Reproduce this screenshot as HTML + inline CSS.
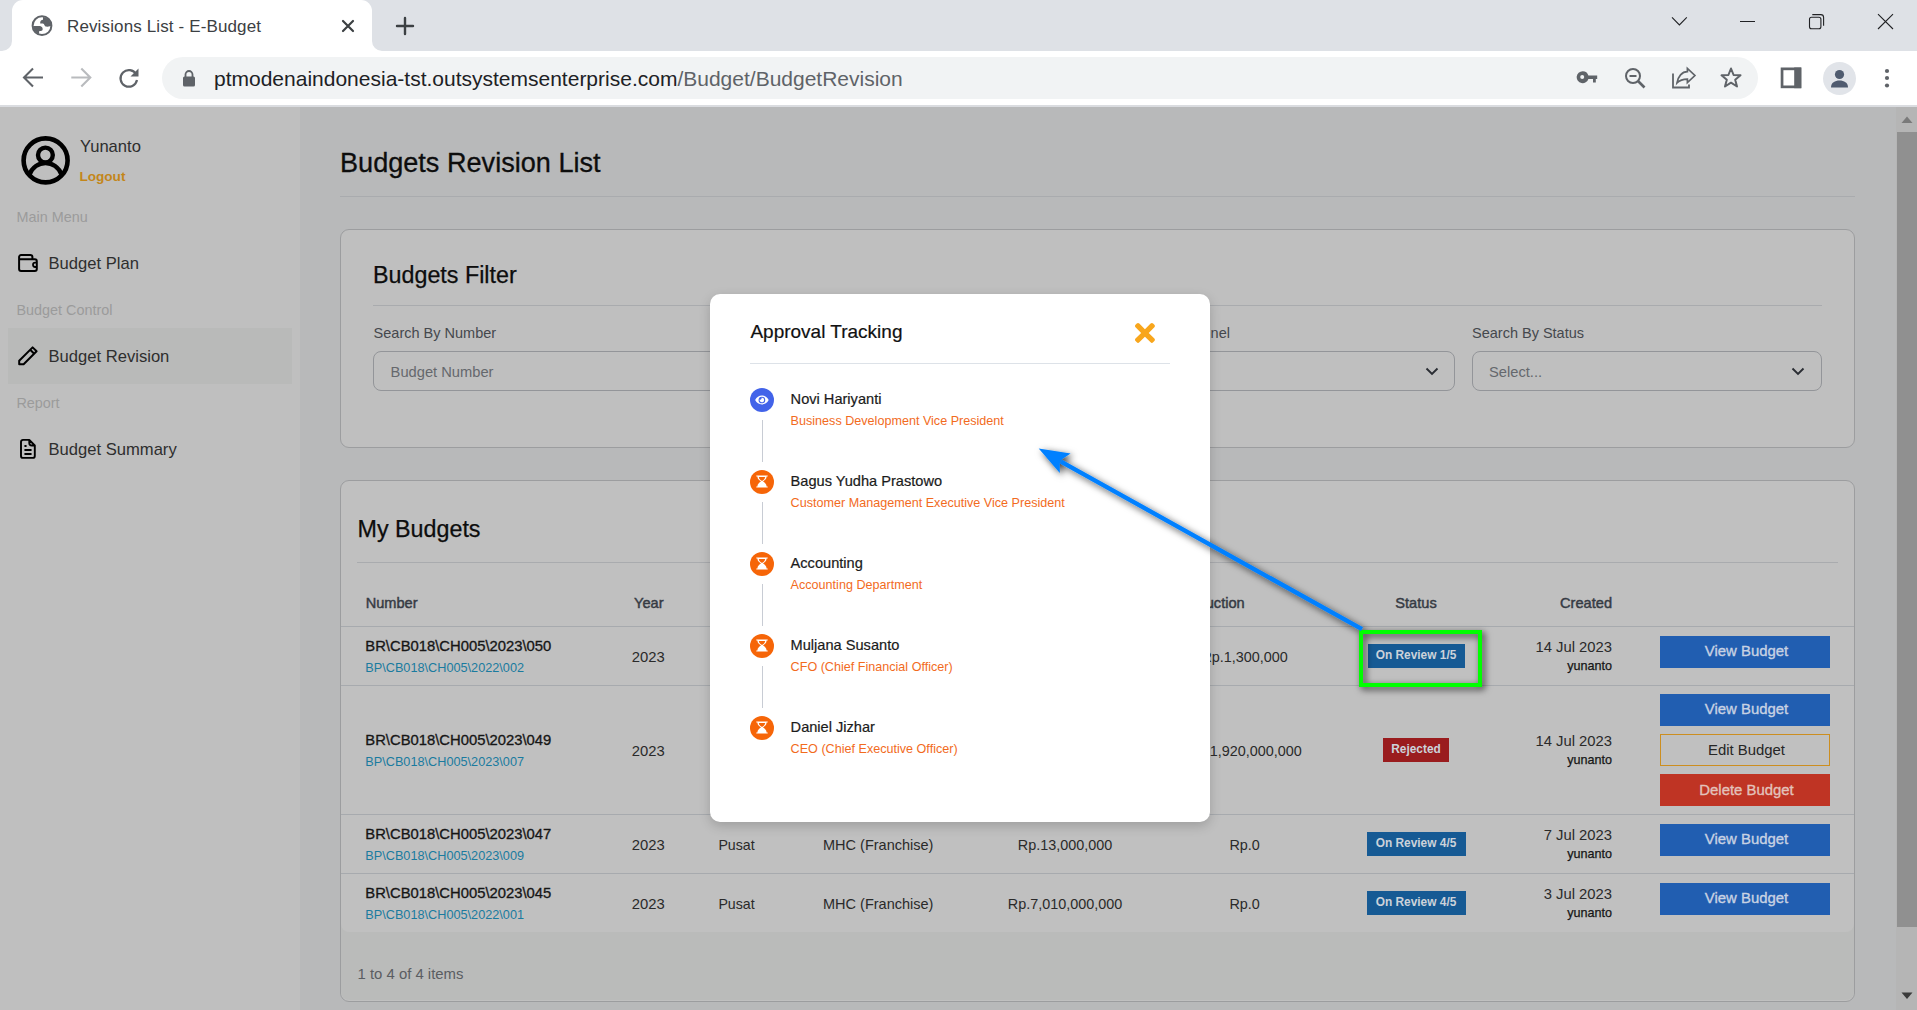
<!DOCTYPE html>
<html><head><meta charset="utf-8"><title>Revisions List - E-Budget</title>
<style>
html,body{margin:0;padding:0;width:1917px;height:1010px;overflow:hidden;background:#fff}
body{position:relative;font-family:"Liberation Sans",sans-serif}
.t{position:absolute;line-height:1;white-space:nowrap}
svg{display:block}
</style></head><body>
<div style="position:absolute;left:0px;top:0px;width:1917px;height:51px;background:#dee1e6"></div>
<div style="position:absolute;left:12px;top:0px;width:360px;height:51px;background:#fff;border-radius:11px 11px 0 0"></div>
<svg style="position:absolute;left:2px;top:41px;" width="10" height="10" viewBox="0 0 10 10"><path d="M10 0 V10 H0 A10 10 0 0 0 10 0 Z" fill="#fff"/></svg>
<svg style="position:absolute;left:372px;top:41px;" width="10" height="10" viewBox="0 0 10 10"><path d="M0 0 V10 H10 A10 10 0 0 1 0 0 Z" fill="#fff"/></svg>
<svg style="position:absolute;left:31px;top:15px;" width="22" height="22" viewBox="0 0 22 22"><defs><clipPath id="gc"><circle cx="11" cy="10.7" r="9"/></clipPath></defs><circle cx="11" cy="10.7" r="9.4" stroke="#5f6368" stroke-width="2" fill="#fff"/><g clip-path="url(#gc)" fill="#5f6368"><path d="M12 0 V4.8 C10.5 5 9.2 6 9.2 7.5 V8.6 H11.8 C12.6 8.6 13.2 9.5 13.6 10.6 C14.2 11.6 15.5 11.9 16.5 11.7 L22 10.5 L22 0 Z"/><path d="M0 10.9 H8.6 C10.3 11 11.7 12.2 11.7 14 C11.7 15.2 11 16 9.8 16 H8.6 C8.3 16 8.1 16.4 8.1 17 V22 H0 Z"/></g></svg>
<div class="t" style="top:18.21px;font-size:17px;color:#3c4043;letter-spacing:0.13px;left:67px;">Revisions List - E-Budget</div>
<svg style="position:absolute;left:341px;top:19px;" width="14" height="14" viewBox="0 0 14 14"><path d="M2 2 L12 12 M12 2 L2 12" stroke="#3c4043" stroke-width="2.2" stroke-linecap="round"/></svg>
<svg style="position:absolute;left:395px;top:16px;" width="20" height="20" viewBox="0 0 20 20"><path d="M10 2 V18 M2 10 H18" stroke="#3c4043" stroke-width="2.4" stroke-linecap="round"/></svg>
<svg style="position:absolute;left:1671px;top:15px;" width="18" height="12" viewBox="0 0 18 12"><path d="M1 2.3 L8.4 9.9 L15.8 2.3" stroke="#202124" stroke-width="1.1" fill="none"/></svg>
<div style="position:absolute;left:1740px;top:21px;width:15.2px;height:1.2px;background:#202124"></div>
<svg style="position:absolute;left:1807px;top:12px;" width="20" height="20" viewBox="0 0 20 20"><rect x="2.5" y="5.3" width="11.4" height="11.4" rx="2" stroke="#202124" stroke-width="1.1" fill="none"/><path d="M5.3 2.6 H13.8 Q16.6 2.6 16.6 5.4 V13.8" stroke="#202124" stroke-width="1.1" fill="none"/></svg>
<svg style="position:absolute;left:1876px;top:12px;" width="20" height="20" viewBox="0 0 20 20"><path d="M2 2.2 L17 17 M17 2.2 L2 17" stroke="#202124" stroke-width="1.1"/></svg>
<div style="position:absolute;left:0px;top:51px;width:1917px;height:54px;background:#fff"></div>
<div style="position:absolute;left:0px;top:105px;width:1917px;height:2px;background:#dadce0"></div>
<svg style="position:absolute;left:21px;top:66px;" width="24" height="24" viewBox="0 0 24 24"><path d="M22 11.5 H3.5 M12 2.5 L3 11.5 L12 20.5" stroke="#5f6368" stroke-width="2.1" fill="none"/></svg>
<svg style="position:absolute;left:69px;top:66px;" width="24" height="24" viewBox="0 0 24 24"><path d="M2.3 11.5 H20.8 M12.3 2.5 L21.3 11.5 L12.3 20.5" stroke="#b9bbbe" stroke-width="2.1" fill="none"/></svg>
<svg style="position:absolute;left:117px;top:66px;" width="24" height="24" viewBox="0 0 24 24"><path d="M19.2 8.5 A8.3 8.3 0 1 0 20 14" stroke="#5f6368" stroke-width="2.2" fill="none"/><path d="M21.5 2.5 V10.5 H13.5 Z" fill="#5f6368"/></svg>
<div style="position:absolute;left:162px;top:57px;width:1596px;height:42px;background:#f1f3f4;border-radius:21px"></div>
<svg style="position:absolute;left:181px;top:69px;" width="16" height="18" viewBox="0 0 16 18"><path d="M4.5 8 V5.5 A3.5 3.5 0 0 1 11.5 5.5 V8" stroke="#5f6368" stroke-width="1.8" fill="none"/><rect x="2" y="7.5" width="12" height="10" rx="1.5" fill="#5f6368"/></svg>
<div class="t" style="top:68.22px;font-size:21px;color:#000;left:214px;"><span style="color:#202124">ptmodenaindonesia-tst.outsystemsenterprise.com</span><span style="color:#5f6368">/Budget/BudgetRevision</span></div>
<svg style="position:absolute;left:1575px;top:70px;" width="24" height="14" viewBox="0 0 24 14"><path fill-rule="evenodd" d="M7.7 1.2 A6 6 0 1 0 13.4 9 H18 V12.5 H20.8 V9 H22.2 V5.5 H13.4 A6 6 0 0 0 7.7 1.2 Z M7.2 4.9 A2 2 0 1 1 7.2 8.9 A2 2 0 1 1 7.2 4.9 Z" fill="#5f6368"/></svg>
<svg style="position:absolute;left:1623px;top:66px;" width="24" height="24" viewBox="0 0 24 24"><circle cx="10" cy="10" r="7" stroke="#5f6368" stroke-width="2" fill="none"/><path d="M6.5 10 H13.5" stroke="#5f6368" stroke-width="2"/><path d="M15 15 L21.5 21.5" stroke="#5f6368" stroke-width="2.6"/></svg>
<svg style="position:absolute;left:1671px;top:66px;" width="26" height="24" viewBox="0 0 26 24"><path d="M2 7.6 V21.5 H18 V18.4" stroke="#5f6368" stroke-width="1.8" fill="none"/><path d="M6 17 C7 10.5 11 5.7 16.4 5.7 V2.5 L23.9 9.5 L16.4 16.5 V13.2 C11.5 13.2 8.5 14.5 6 17 Z" stroke="#5f6368" stroke-width="1.7" fill="none" stroke-linejoin="miter"/></svg>
<svg style="position:absolute;left:1719px;top:66px;" width="24" height="24" viewBox="0 0 24 24"><path d="M12 2.5 L14.6 9 L21.5 9.3 L16.2 13.7 L18 20.5 L12 16.7 L6 20.5 L7.8 13.7 L2.5 9.3 L9.4 9 Z" stroke="#5f6368" stroke-width="2" fill="none" stroke-linejoin="round"/></svg>
<svg style="position:absolute;left:1779px;top:66px;" width="24" height="24" viewBox="0 0 24 24"><rect x="3.05" y="2.85" width="17.9" height="18" stroke="#5f6368" stroke-width="2.7" fill="none"/><rect x="15.2" y="1.5" width="7.1" height="20.7" fill="#5f6368"/></svg>
<svg style="position:absolute;left:1823px;top:62px;" width="33" height="33" viewBox="0 0 33 33"><circle cx="16.5" cy="16.5" r="16.5" fill="#e1e4e9"/><circle cx="16.5" cy="12.5" r="4.6" fill="#4f5b6f"/><path d="M8 25.5 C8 20.5 12 18.5 16.5 18.5 C21 18.5 25 20.5 25 25.5 Z" fill="#4f5b6f"/></svg>
<svg style="position:absolute;left:1883px;top:68px;" width="8" height="20" viewBox="0 0 8 20"><circle cx="4" cy="3" r="2.1" fill="#5f6368"/><circle cx="4" cy="10" r="2.1" fill="#5f6368"/><circle cx="4" cy="17.5" r="2.1" fill="#5f6368"/></svg>
<div style="position:absolute;left:0px;top:107px;width:300px;height:903px;background:#bfbfbf"></div>
<div style="position:absolute;left:300px;top:107px;width:1597px;height:903px;background:#b8b9ba"></div>
<div style="position:absolute;left:1896px;top:107px;width:21px;height:903px;background:#b5b5b5"></div>
<div style="position:absolute;left:1897px;top:132px;width:20px;height:795px;background:#909090"></div>
<svg style="position:absolute;left:1901px;top:116px;" width="12" height="8" viewBox="0 0 12 8"><path d="M6 0.5 L11.5 7 H0.5 Z" fill="#7a7a7a"/></svg>
<svg style="position:absolute;left:1901px;top:992px;" width="12" height="8" viewBox="0 0 12 8"><path d="M0.5 0.5 H11.5 L6 7 Z" fill="#3b3b3b"/></svg>
<svg style="position:absolute;left:20px;top:135px;" width="52" height="52" viewBox="0 0 52 52"><circle cx="25.6" cy="25.4" r="22" stroke="#000" stroke-width="4.6" fill="none"/><circle cx="25.4" cy="20" r="7.4" stroke="#000" stroke-width="4.4" fill="none"/><path d="M9 40.5 C12 32 19 28 25.5 28 C32 28 39 32 42 40.5" stroke="#000" stroke-width="4.4" fill="none"/></svg>
<div class="t" style="top:139.24px;font-size:16.6px;color:#2e2e2e;left:80px;">Yunanto</div>
<div class="t" style="top:169.68px;font-size:13.6px;color:#c3861a;font-weight:700;left:79.4px;">Logout</div>
<div class="t" style="top:209.61px;font-size:14.4px;color:#9b9b9b;left:16.6px;">Main Menu</div>
<div class="t" style="top:303.01px;font-size:14.4px;color:#9b9b9b;left:16.4px;">Budget Control</div>
<div class="t" style="top:395.81px;font-size:14.4px;color:#9b9b9b;left:16.4px;">Report</div>
<div style="position:absolute;left:8px;top:328px;width:284px;height:56px;background:#b9bab9"></div>
<div class="t" style="top:256.14px;font-size:16.6px;color:#2e2e2e;left:48.5px;">Budget Plan</div>
<div class="t" style="top:349.24px;font-size:16.6px;color:#2e2e2e;left:48.5px;">Budget Revision</div>
<div class="t" style="top:441.94px;font-size:16.6px;color:#2e2e2e;left:48.5px;">Budget Summary</div>
<svg style="position:absolute;left:17px;top:253px;" width="23" height="21" viewBox="0 0 23 21"><path d="M2.1 15.9 V4 A2 2 0 0 1 4.1 2 H13.4 A2 2 0 0 1 15.4 4 V6.2 H17.8 A2 2 0 0 1 19.8 8.2 V15.9 A2 2 0 0 1 17.8 17.9 H4.1 A2 2 0 0 1 2.1 15.9 Z M2.1 6.2 H15.4" stroke="#000" stroke-width="2" fill="none" stroke-linejoin="round"/><path d="M19.8 9.6 H18.2 A2.2 2.2 0 0 0 18.2 14 H19.8" stroke="#000" stroke-width="1.8" fill="none"/></svg>
<svg style="position:absolute;left:17px;top:345px;" width="23" height="22" viewBox="0 0 23 22"><path d="M2.2 19.3 V15.8 L15.6 2.4 L19.6 6.3 L6.6 19.3 Z M13.2 4.8 L17.2 8.7" stroke="#000" stroke-width="2" fill="none" stroke-linejoin="round"/></svg>
<svg style="position:absolute;left:18px;top:438px;" width="20" height="22" viewBox="0 0 20 22"><path d="M3 4 A2 2 0 0 1 5 1.9 H11.3 L16.8 7.5 V17.9 A2 2 0 0 1 14.8 19.9 H5 A2 2 0 0 1 3 17.9 Z M11.3 1.9 V5 A2.5 2.5 0 0 0 13.8 7.5 H16.8" stroke="#000" stroke-width="1.9" fill="none" stroke-linejoin="round"/><path d="M7.1 8 H7.9 M7.1 12 H12.9 M7.1 16 H12.9" stroke="#000" stroke-width="1.8" stroke-linecap="round"/></svg>
<div class="t" style="top:149.45px;font-size:27.1px;color:#0d0d0d;-webkit-text-stroke:0.3px #0d0d0d;left:340px;">Budgets Revision List</div>
<div style="position:absolute;left:340px;top:196px;width:1515px;height:1px;background:#a9abae"></div>
<div style="position:absolute;left:340px;top:229px;width:1515px;height:219px;background:#bfbfbf;border:1px solid #9c9d9f;border-radius:9px;box-sizing:border-box"></div>
<div class="t" style="top:263.87px;font-size:23.3px;color:#0d0d0d;-webkit-text-stroke:0.25px #0d0d0d;left:373px;">Budgets Filter</div>
<div style="position:absolute;left:373px;top:305px;width:1449px;height:1px;background:#a9abae"></div>
<div class="t" style="top:326.22px;font-size:14.5px;color:#45484d;left:373.6px;">Search By Number</div>
<div class="t" style="top:326.22px;font-size:14.5px;color:#45484d;left:1105px;">Search By Channel</div>
<div class="t" style="top:326.22px;font-size:14.5px;color:#45484d;left:1472px;">Search By Status</div>
<div style="position:absolute;left:373px;top:351px;width:350px;height:40px;background:#bfbfbf;border:1px solid #939599;border-radius:8px;box-sizing:border-box"></div>
<div style="position:absolute;left:1105px;top:351px;width:350px;height:40px;background:#bfbfbf;border:1px solid #939599;border-radius:8px;box-sizing:border-box"></div>
<div style="position:absolute;left:1472px;top:351px;width:350px;height:40px;background:#bfbfbf;border:1px solid #939599;border-radius:8px;box-sizing:border-box"></div>
<div class="t" style="top:364.85px;font-size:14.7px;color:#65686d;left:390.6px;">Budget Number</div>
<div class="t" style="top:364.85px;font-size:14.7px;color:#65686d;left:1489px;">Select...</div>
<svg style="position:absolute;left:1423.5px;top:363px;" width="16" height="16" viewBox="0 0 16 16"><path d="M2.5 5.5 L8 11 L13.5 5.5" stroke="#2a2d33" stroke-width="1.9" fill="none"/></svg>
<svg style="position:absolute;left:1790px;top:363px;" width="16" height="16" viewBox="0 0 16 16"><path d="M2.5 5.5 L8 11 L13.5 5.5" stroke="#2a2d33" stroke-width="1.9" fill="none"/></svg>
<div style="position:absolute;left:340px;top:480px;width:1515px;height:522px;background:#c0c0c0;border:1px solid #9c9d9f;border-radius:9px;box-sizing:border-box"></div>
<div class="t" style="top:518.17px;font-size:23.3px;color:#0d0d0d;-webkit-text-stroke:0.25px #0d0d0d;left:357.5px;">My Budgets</div>
<div style="position:absolute;left:357px;top:562px;width:1481px;height:1px;background:#a9abae"></div>
<div style="position:absolute;left:341px;top:920px;width:1513px;height:80px;background:#babbba;border-radius:0 0 8px 8px"></div>
<div style="position:absolute;left:341px;top:900px;width:1513px;height:32px;background:#c0c0c0;border-radius:0 0 8px 8px"></div>
<div class="t" style="top:595.64px;font-size:14.6px;color:#363b44;-webkit-text-stroke:0.45px #363b44;left:365.7px;">Number</div>
<div class="t" style="top:595.64px;font-size:14.6px;color:#363b44;-webkit-text-stroke:0.45px #363b44;left:634px;">Year</div>
<div class="t" style="top:595.64px;font-size:14.6px;color:#363b44;-webkit-text-stroke:0.45px #363b44;left:644.70px;width:600px;text-align:right;">Budget Reduction</div>
<div class="t" style="top:595.64px;font-size:14.6px;color:#363b44;-webkit-text-stroke:0.45px #363b44;left:1116.00px;width:600px;text-align:center;">Status</div>
<div class="t" style="top:595.64px;font-size:14.6px;color:#363b44;-webkit-text-stroke:0.45px #363b44;left:1012.00px;width:600px;text-align:right;">Created</div>
<div style="position:absolute;left:341px;top:626px;width:1513px;height:1px;background:#a7aaae"></div>
<div style="position:absolute;left:341px;top:685px;width:1513px;height:1px;background:#a7aaae"></div>
<div style="position:absolute;left:341px;top:814px;width:1513px;height:1px;background:#a7aaae"></div>
<div style="position:absolute;left:341px;top:873px;width:1513px;height:1px;background:#a7aaae"></div>
<div class="t" style="top:638.97px;font-size:14.8px;color:#161616;-webkit-text-stroke:0.32px #161616;left:365.3px;">BR\CB018\CH005\2023\050</div>
<div class="t" style="top:661.95px;font-size:12.7px;color:#1a7b9f;left:365.3px;">BP\CB018\CH005\2022\002</div>
<div class="t" style="top:650.47px;font-size:14.8px;color:#2a2a2a;left:631.8px;">2023</div>
<div class="t" style="top:649.98px;font-size:14.2px;color:#2a2a2a;left:718.4px;">Pusat</div>
<div class="t" style="top:649.72px;font-size:14.5px;color:#2a2a2a;left:823px;">MHC (Franchise)</div>
<div class="t" style="top:649.81px;font-size:14.4px;color:#2a2a2a;left:765.00px;width:600px;text-align:center;">Rp.1,300,000</div>
<div class="t" style="top:649.81px;font-size:14.4px;color:#2a2a2a;left:944.60px;width:600px;text-align:center;">Rp.1,300,000</div>
<div style="position:absolute;left:1367.5px;top:644px;width:97px;height:24px;background:#165a94"></div>
<div class="t" style="top:650.42px;font-size:11.9px;color:#ccd2da;font-weight:700;left:1116.00px;width:600px;text-align:center;">On Review 1/5</div>
<div class="t" style="top:640.47px;font-size:14.8px;color:#2a2a2a;left:1012.00px;width:600px;text-align:right;">14 Jul 2023</div>
<div class="t" style="top:660.33px;font-size:12.6px;color:#161616;-webkit-text-stroke:0.25px #161616;left:1012.00px;width:600px;text-align:right;">yunanto</div>
<div style="position:absolute;left:1660px;top:636px;width:170px;height:32px;background:#215eb1"></div>
<div class="t" style="top:644.38px;font-size:14.9px;color:#c8d2e3;-webkit-text-stroke:0.35px #c8d2e3;left:1446.50px;width:600px;text-align:center;">View Budget</div>
<div class="t" style="top:732.97px;font-size:14.8px;color:#161616;-webkit-text-stroke:0.32px #161616;left:365.3px;">BR\CB018\CH005\2023\049</div>
<div class="t" style="top:755.95px;font-size:12.7px;color:#1a7b9f;left:365.3px;">BP\CB018\CH005\2023\007</div>
<div class="t" style="top:744.47px;font-size:14.8px;color:#2a2a2a;left:631.8px;">2023</div>
<div class="t" style="top:743.98px;font-size:14.2px;color:#2a2a2a;left:718.4px;">Pusat</div>
<div class="t" style="top:743.72px;font-size:14.5px;color:#2a2a2a;left:823px;">MHC (Franchise)</div>
<div class="t" style="top:743.81px;font-size:14.4px;color:#2a2a2a;left:765.00px;width:600px;text-align:center;">Rp.1,920,000,000</div>
<div class="t" style="top:743.81px;font-size:14.4px;color:#2a2a2a;left:944.60px;width:600px;text-align:center;">Rp.1,920,000,000</div>
<div style="position:absolute;left:1383.0px;top:738px;width:66px;height:24px;background:#9a1c1e"></div>
<div class="t" style="top:744.42px;font-size:11.9px;color:#ccd2da;font-weight:700;left:1116.00px;width:600px;text-align:center;">Rejected</div>
<div class="t" style="top:734.47px;font-size:14.8px;color:#2a2a2a;left:1012.00px;width:600px;text-align:right;">14 Jul 2023</div>
<div class="t" style="top:754.33px;font-size:12.6px;color:#161616;-webkit-text-stroke:0.25px #161616;left:1012.00px;width:600px;text-align:right;">yunanto</div>
<div style="position:absolute;left:1660px;top:694px;width:170px;height:32px;background:#215eb1"></div>
<div class="t" style="top:702.38px;font-size:14.9px;color:#c8d2e3;-webkit-text-stroke:0.35px #c8d2e3;left:1446.50px;width:600px;text-align:center;">View Budget</div>
<div style="position:absolute;left:1660px;top:734px;width:170px;height:32px;background:transparent;border:1px solid #cc8e20;box-sizing:border-box"></div>
<div class="t" style="top:742.68px;font-size:14.9px;color:#262626;left:1446.50px;width:600px;text-align:center;">Edit Budget</div>
<div style="position:absolute;left:1660px;top:774px;width:170px;height:32px;background:#bf3424"></div>
<div class="t" style="top:782.68px;font-size:14.9px;color:#e3c2bb;-webkit-text-stroke:0.35px #e3c2bb;left:1446.50px;width:600px;text-align:center;">Delete Budget</div>
<div class="t" style="top:826.97px;font-size:14.8px;color:#161616;-webkit-text-stroke:0.32px #161616;left:365.3px;">BR\CB018\CH005\2023\047</div>
<div class="t" style="top:849.95px;font-size:12.7px;color:#1a7b9f;left:365.3px;">BP\CB018\CH005\2023\009</div>
<div class="t" style="top:838.47px;font-size:14.8px;color:#2a2a2a;left:631.8px;">2023</div>
<div class="t" style="top:837.98px;font-size:14.2px;color:#2a2a2a;left:718.4px;">Pusat</div>
<div class="t" style="top:837.72px;font-size:14.5px;color:#2a2a2a;left:823px;">MHC (Franchise)</div>
<div class="t" style="top:837.81px;font-size:14.4px;color:#2a2a2a;left:765.00px;width:600px;text-align:center;">Rp.13,000,000</div>
<div class="t" style="top:837.81px;font-size:14.4px;color:#2a2a2a;left:944.60px;width:600px;text-align:center;">Rp.0</div>
<div style="position:absolute;left:1366.5px;top:832px;width:99px;height:24px;background:#165a94"></div>
<div class="t" style="top:838.42px;font-size:11.9px;color:#ccd2da;font-weight:700;left:1116.00px;width:600px;text-align:center;">On Review 4/5</div>
<div class="t" style="top:828.47px;font-size:14.8px;color:#2a2a2a;left:1012.00px;width:600px;text-align:right;">7 Jul 2023</div>
<div class="t" style="top:848.33px;font-size:12.6px;color:#161616;-webkit-text-stroke:0.25px #161616;left:1012.00px;width:600px;text-align:right;">yunanto</div>
<div style="position:absolute;left:1660px;top:824px;width:170px;height:32px;background:#215eb1"></div>
<div class="t" style="top:832.38px;font-size:14.9px;color:#c8d2e3;-webkit-text-stroke:0.35px #c8d2e3;left:1446.50px;width:600px;text-align:center;">View Budget</div>
<div class="t" style="top:885.97px;font-size:14.8px;color:#161616;-webkit-text-stroke:0.32px #161616;left:365.3px;">BR\CB018\CH005\2023\045</div>
<div class="t" style="top:908.95px;font-size:12.7px;color:#1a7b9f;left:365.3px;">BP\CB018\CH005\2022\001</div>
<div class="t" style="top:897.47px;font-size:14.8px;color:#2a2a2a;left:631.8px;">2023</div>
<div class="t" style="top:896.98px;font-size:14.2px;color:#2a2a2a;left:718.4px;">Pusat</div>
<div class="t" style="top:896.72px;font-size:14.5px;color:#2a2a2a;left:823px;">MHC (Franchise)</div>
<div class="t" style="top:896.81px;font-size:14.4px;color:#2a2a2a;left:765.00px;width:600px;text-align:center;">Rp.7,010,000,000</div>
<div class="t" style="top:896.81px;font-size:14.4px;color:#2a2a2a;left:944.60px;width:600px;text-align:center;">Rp.0</div>
<div style="position:absolute;left:1366.5px;top:891px;width:99px;height:24px;background:#165a94"></div>
<div class="t" style="top:897.42px;font-size:11.9px;color:#ccd2da;font-weight:700;left:1116.00px;width:600px;text-align:center;">On Review 4/5</div>
<div class="t" style="top:887.47px;font-size:14.8px;color:#2a2a2a;left:1012.00px;width:600px;text-align:right;">3 Jul 2023</div>
<div class="t" style="top:907.33px;font-size:12.6px;color:#161616;-webkit-text-stroke:0.25px #161616;left:1012.00px;width:600px;text-align:right;">yunanto</div>
<div style="position:absolute;left:1660px;top:883px;width:170px;height:32px;background:#215eb1"></div>
<div class="t" style="top:891.38px;font-size:14.9px;color:#c8d2e3;-webkit-text-stroke:0.35px #c8d2e3;left:1446.50px;width:600px;text-align:center;">View Budget</div>
<div class="t" style="top:966.98px;font-size:14.9px;color:#5a5d62;left:357.5px;">1 to 4 of 4 items</div>
<div style="position:absolute;left:710px;top:294px;width:500px;height:528px;background:#fff;border-radius:10px;box-shadow:0 4px 12px rgba(0,0,0,0.18)"></div>
<div class="t" style="top:321.61px;font-size:19px;color:#111;-webkit-text-stroke:0.2px #111;left:750.4px;">Approval Tracking</div>
<svg style="position:absolute;left:1135px;top:323px;" width="20" height="20" viewBox="0 0 20 20"><g transform="scale(0.0565) translate(0,-80)"><path d="M242.72 256l100.07-100.07c12.28-12.28 12.28-32.19 0-44.48l-22.24-22.24c-12.28-12.28-32.19-12.28-44.48 0L176 189.28 75.93 89.21c-12.28-12.28-32.19-12.28-44.48 0L9.21 111.45c-12.28 12.28-12.28 32.19 0 44.48L109.28 256 9.21 356.07c-12.28 12.28-12.28 32.19 0 44.48l22.24 22.24c12.28 12.28 32.2 12.28 44.48 0L176 322.72l100.07 100.07c12.28 12.28 32.2 12.28 44.48 0l22.24-22.24c12.28-12.28 12.28-32.19 0-44.48L242.72 256z" fill="#f8a61c"/></g></svg>
<div style="position:absolute;left:750px;top:363px;width:420px;height:1px;background:#dde2e8"></div>
<svg style="position:absolute;left:750px;top:388px;" width="24" height="24" viewBox="0 0 24 24"><circle cx="12" cy="12" r="12" fill="#4263e9"/><g transform="translate(5.2,6.05) scale(0.02326)"><path d="M572.52 241.4C518.29 135.59 410.93 64 288 64S57.68 135.64 3.48 241.41a32.35 32.35 0 0 0 0 29.19C57.71 376.41 165.07 448 288 448s230.320-71.64 284.52-177.41a32.35 32.35 0 0 0 0-29.19zM288 400a144 144 0 1 1 144-144 143.930 143.930 0 0 1-144 144zm0-240a95.310 95.310 0 0 0-25.310 3.790 47.850 47.850 0 0 1-66.900 66.900A95.780 95.780 0 1 0 288 160z" fill="#fff"/></g></svg>
<div style="position:absolute;left:761.5px;top:420px;width:1px;height:42px;background:#c8ccd4"></div>
<div class="t" style="top:392.34px;font-size:14.6px;color:#1b1b1b;-webkit-text-stroke:0.2px #1b1b1b;left:790.6px;">Novi Hariyanti</div>
<div class="t" style="top:414.53px;font-size:12.6px;color:#f26b1d;left:790.6px;">Business Development Vice President</div>
<svg style="position:absolute;left:750px;top:470px;" width="24" height="24" viewBox="0 0 24 24"><circle cx="12" cy="12" r="12" fill="#f66508"/><path d="M6.3 5.5 H17.7 V6.6 H16.6 C16.6 9 14.6 10.6 13 11.5 C14.6 12.4 16.6 14 16.6 16.4 H17.7 V17.5 H6.3 V16.4 H7.4 C7.4 14 9.4 12.4 11 11.5 C9.4 10.6 7.4 9 7.4 6.6 H6.3 Z" fill="#fff"/><path d="M8.8 7.1 H15.2 C15 9 13.5 10.3 12 11 C10.5 10.3 9 9 8.8 7.1 Z" fill="#f66508"/></svg>
<div style="position:absolute;left:761.5px;top:502px;width:1px;height:42px;background:#c8ccd4"></div>
<div class="t" style="top:474.34px;font-size:14.6px;color:#1b1b1b;-webkit-text-stroke:0.2px #1b1b1b;left:790.6px;">Bagus Yudha Prastowo</div>
<div class="t" style="top:496.53px;font-size:12.6px;color:#f26b1d;left:790.6px;">Customer Management Executive Vice President</div>
<svg style="position:absolute;left:750px;top:552px;" width="24" height="24" viewBox="0 0 24 24"><circle cx="12" cy="12" r="12" fill="#f66508"/><path d="M6.3 5.5 H17.7 V6.6 H16.6 C16.6 9 14.6 10.6 13 11.5 C14.6 12.4 16.6 14 16.6 16.4 H17.7 V17.5 H6.3 V16.4 H7.4 C7.4 14 9.4 12.4 11 11.5 C9.4 10.6 7.4 9 7.4 6.6 H6.3 Z" fill="#fff"/><path d="M8.8 7.1 H15.2 C15 9 13.5 10.3 12 11 C10.5 10.3 9 9 8.8 7.1 Z" fill="#f66508"/></svg>
<div style="position:absolute;left:761.5px;top:584px;width:1px;height:42px;background:#c8ccd4"></div>
<div class="t" style="top:556.34px;font-size:14.6px;color:#1b1b1b;-webkit-text-stroke:0.2px #1b1b1b;left:790.6px;">Accounting</div>
<div class="t" style="top:578.53px;font-size:12.6px;color:#f26b1d;left:790.6px;">Accounting Department</div>
<svg style="position:absolute;left:750px;top:634px;" width="24" height="24" viewBox="0 0 24 24"><circle cx="12" cy="12" r="12" fill="#f66508"/><path d="M6.3 5.5 H17.7 V6.6 H16.6 C16.6 9 14.6 10.6 13 11.5 C14.6 12.4 16.6 14 16.6 16.4 H17.7 V17.5 H6.3 V16.4 H7.4 C7.4 14 9.4 12.4 11 11.5 C9.4 10.6 7.4 9 7.4 6.6 H6.3 Z" fill="#fff"/><path d="M8.8 7.1 H15.2 C15 9 13.5 10.3 12 11 C10.5 10.3 9 9 8.8 7.1 Z" fill="#f66508"/></svg>
<div style="position:absolute;left:761.5px;top:666px;width:1px;height:42px;background:#c8ccd4"></div>
<div class="t" style="top:638.34px;font-size:14.6px;color:#1b1b1b;-webkit-text-stroke:0.2px #1b1b1b;left:790.6px;">Muljana Susanto</div>
<div class="t" style="top:660.53px;font-size:12.6px;color:#f26b1d;left:790.6px;">CFO (Chief Financial Officer)</div>
<svg style="position:absolute;left:750px;top:716px;" width="24" height="24" viewBox="0 0 24 24"><circle cx="12" cy="12" r="12" fill="#f66508"/><path d="M6.3 5.5 H17.7 V6.6 H16.6 C16.6 9 14.6 10.6 13 11.5 C14.6 12.4 16.6 14 16.6 16.4 H17.7 V17.5 H6.3 V16.4 H7.4 C7.4 14 9.4 12.4 11 11.5 C9.4 10.6 7.4 9 7.4 6.6 H6.3 Z" fill="#fff"/><path d="M8.8 7.1 H15.2 C15 9 13.5 10.3 12 11 C10.5 10.3 9 9 8.8 7.1 Z" fill="#f66508"/></svg>
<div class="t" style="top:720.34px;font-size:14.6px;color:#1b1b1b;-webkit-text-stroke:0.2px #1b1b1b;left:790.6px;">Daniel Jizhar</div>
<div class="t" style="top:742.53px;font-size:12.6px;color:#f26b1d;left:790.6px;">CEO (Chief Executive Officer)</div>
<svg style="position:absolute;left:0;top:0" width="1917" height="1010" viewBox="0 0 1917 1010"><defs><filter id="sh" x="-20%" y="-20%" width="140%" height="140%"><feDropShadow dx="2.5" dy="2.5" stdDeviation="3.5" flood-color="#000" flood-opacity="0.75"/></filter></defs><g filter="url(#sh)"><rect x="1361" y="632" width="119" height="53" stroke="#00ff00" stroke-width="4" fill="none"/><path d="M1362 629.2 L1061 461.6" stroke="#0080ff" stroke-width="4.4"/><path d="M1038.7 448.4 L1070.6 453.6 L1062.3 459.1 L1059.8 463.3 L1059.8 473 Z" fill="#0080ff"/></g></svg>
</body></html>
